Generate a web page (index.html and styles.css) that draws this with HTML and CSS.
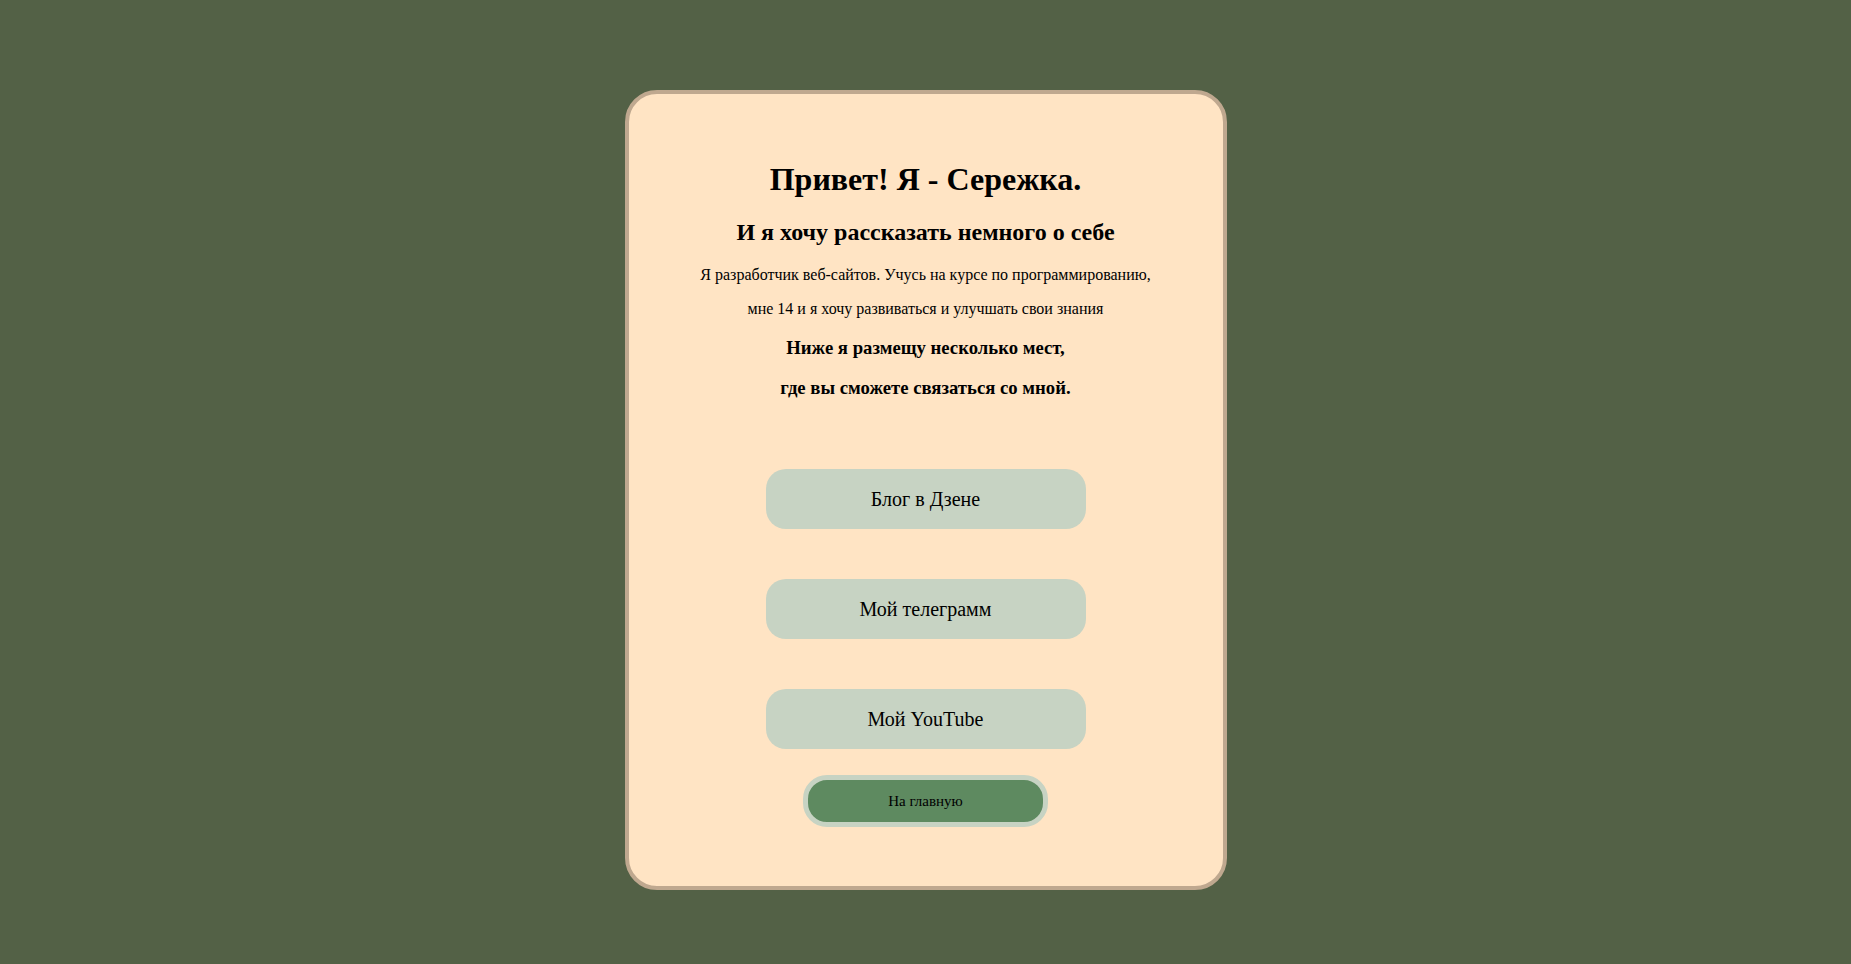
FILE: index.html
```html
<!DOCTYPE html>
<html lang="ru">
<head>
<meta charset="utf-8">
<title>Привет! Я - Сережка.</title>
<link rel="stylesheet" href="styles.css">
</head>
<body>
<main class="card">
  <h1 class="title">Привет! Я - Сережка.</h1>
  <h2 class="subtitle">И я хочу рассказать немного о себе</h2>
  <p class="text">Я разработчик веб-сайтов. Учусь на курсе по программированию,</p>
  <p class="text">мне 14 и я хочу развиваться и улучшать свои знания</p>
  <h3 class="note">Ниже я размещу несколько мест,</h3>
  <h3 class="note">где вы сможете связаться со мной.</h3>
  <nav class="links">
    <a class="link" href="#">Блог в Дзене</a>
    <a class="link" href="#">Мой телеграмм</a>
    <a class="link" href="#">Мой YouTube</a>
  </nav>
  <a class="home" href="#">На главную</a>
</main>
</body>
</html>
```

FILE: styles.css
```css
html, body {
  margin: 0;
  padding: 0;
}
body {
  background: #536146;
  min-height: 100vh;
  padding-top: 90px;
  box-sizing: border-box;
  font-family: "Liberation Serif", "Times New Roman", serif;
  color: #000;
}
.card {
  width: 602px;
  box-sizing: border-box;
  margin: 0 auto;
  background: #ffe4c4;
  border: 4px solid #bfa88f;
  border-radius: 32px;
  padding: 46px 0 59px;
  text-align: center;
}
.title {
  font-size: 32px;
  margin: 21px 0;
}
.subtitle {
  font-size: 24px;
  margin: 20px 0;
}
.text {
  font-size: 16px;
  margin: 16px 0;
}
.note {
  font-size: 18.72px;
  margin: 18.72px 0;
}
.links {
  display: flex;
  flex-direction: column;
  align-items: center;
  gap: 50px;
  margin-top: 70px;
}
.link {
  display: flex;
  align-items: center;
  justify-content: center;
  width: 320px;
  height: 60px;
  background: #c7d3c3;
  border-radius: 20px;
  font-size: 20px;
  color: #000;
  text-decoration: none;
}
.home {
  display: flex;
  align-items: center;
  justify-content: center;
  box-sizing: border-box;
  width: 245px;
  height: 52px;
  margin: 26px auto 0;
  background: #5e8a60;
  border: 5px solid #c7d3c3;
  border-radius: 24px;
  font-size: 15px;
  color: #000;
  text-decoration: none;
}
```
